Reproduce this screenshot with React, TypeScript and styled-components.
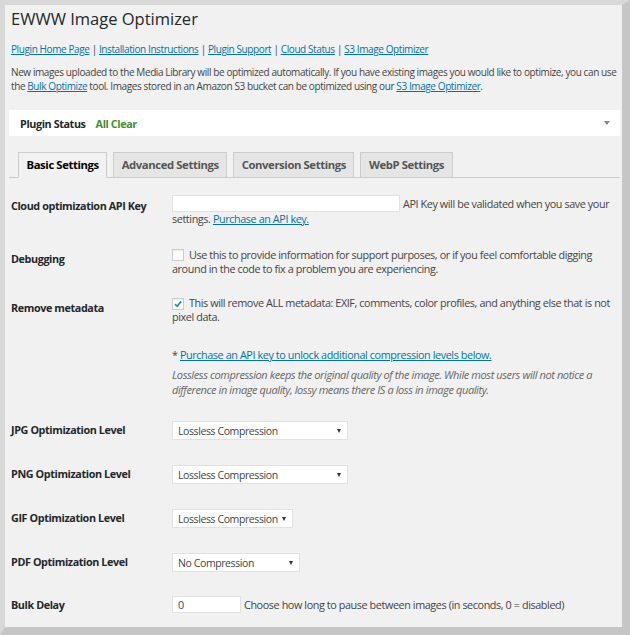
import React from 'react';
import styled, { createGlobalStyle } from 'styled-components';

const GlobalStyle = createGlobalStyle`
  html, body { margin: 0; padding: 0; }
  body { background: #c9c9c9; font-family: "Open Sans", "Noto Sans", sans-serif; }
`;

const Frame = styled.div`
  width: 630px;
  height: 635px;
  box-sizing: border-box;
  border-style: solid;
  border-width: 5px 8px 8px 5px;
  border-color: #d8d8d8 #c6c6c6 #c6c6c6 #d8d8d8;
  background: #f1f1f1;
  padding: 2px 4px 0 6px;
  font-size: 10px;
  letter-spacing: -0.4px;
  color: #444;
  overflow: hidden;
`;

const Title = styled.h1`
  margin: 0;
  font-size: 16.5px;
  font-weight: 400;
  line-height: 24px;
  letter-spacing: 0;
  color: #23282d;
`;

const Para = styled.p<{ $space: number }>`
  margin: ${(p) => p.$space}px 0 0;
  line-height: 14px;
`;

const Link = styled.a`
  color: #0073aa;
  text-decoration: underline;
`;

const StatusBox = styled.div`
  margin: 17px -2px 0;
  height: 26px;
  background: #fff;
  display: flex;
  align-items: center;
  padding: 0 10px 0 11px;
  font-size: 10.8px;
`;

const StatusLabel = styled.span`
  font-weight: 700;
  color: #23282d;
`;

const StatusValue = styled.span`
  font-weight: 700;
  color: #3f8f2f;
  margin-left: 10px;
`;

const Caret = styled.span`
  margin-left: auto;
  width: 0;
  height: 0;
  border-left: 3px solid transparent;
  border-right: 3px solid transparent;
  border-top: 4px solid #888;
`;

const TabBar = styled.div`
  margin: 16px -2px 0;
  padding-left: 9px;
  display: flex;
  gap: 6px;
  border-bottom: 1px solid #ccc;
`;

const Tab = styled.div<{ $active?: boolean }>`
  height: 26px;
  box-sizing: border-box;
  margin-bottom: -1px;
  padding: 0 7.5px;
  border: 1px solid #ccc;
  border-bottom: 1px solid ${(p) => (p.$active ? '#f1f1f1' : '#ccc')};
  background: ${(p) => (p.$active ? '#f1f1f1' : '#e5e5e5')};
  color: ${(p) => (p.$active ? '#000' : '#555')};
  font-weight: 700;
  font-size: 11.3px;
  line-height: 24px;
`;

const Row = styled.div<{ $space: number }>`
  display: flex;
  margin-top: ${(p) => p.$space}px;
  font-size: 10.8px;
`;

const Label = styled.div<{ $drop: number }>`
  width: 161px;
  flex: none;
  padding-top: ${(p) => p.$drop}px;
  font-weight: 700;
  color: #23282d;
  line-height: 14px;
`;

const Field = styled.div`
  flex: 1;
  line-height: 14px;
`;

const FirstLine = styled.div`
  display: flex;
  align-items: center;
  gap: 3px;
  height: 17px;
`;

const TextInput = styled.input<{ $w: number }>`
  width: ${(p) => p.$w}px;
  height: 17px;
  box-sizing: border-box;
  margin: 0;
  padding: 0 5px;
  border: 1px solid #e1e1e1;
  background: #fff;
  font: inherit;
  color: #444;
  outline: none;
`;

const Check = styled.span`
  display: inline-flex;
  align-items: center;
  justify-content: center;
  width: 12px;
  height: 12px;
  box-sizing: border-box;
  border: 1px solid #c9ccd0;
  background: #fff;
  vertical-align: -2px;
  margin-right: 5px;
  box-shadow: inset 0 1px 2px rgba(0, 0, 0, 0.08);
`;

const Note = styled.p`
  margin: 5px 0 0;
  line-height: 15px;
  font-size: 11px;
  font-style: italic;
  color: #666;
`;

const SelectBox = styled.div<{ $w: number }>`
  width: ${(p) => p.$w}px;
  height: 19px;
  box-sizing: border-box;
  display: flex;
  align-items: center;
  padding: 0 6px 0 5px;
  background: #fff;
  border: 1px solid #e1e1e1;
  color: #444;
  font-size: 10.5px;
`;

const SelectCaret = styled.span`
  margin-left: auto;
  width: 0;
  height: 0;
  border-left: 2px solid transparent;
  border-right: 2px solid transparent;
  border-top: 4px solid #333;
`;

function Checkbox({ on }: { on?: boolean }) {
  return (
    <Check>
      {on && (
        <svg width="10" height="10" viewBox="0 0 10 10">
          <path d="M2 5.2 L4.1 7.3 L8.2 2.4" fill="none" stroke="#1e8cbe" strokeWidth="1.7" />
        </svg>
      )}
    </Check>
  );
}

function Select({ w, value }: { w: number; value: string }) {
  return (
    <SelectBox $w={w}>
      {value}
      <SelectCaret />
    </SelectBox>
  );
}

const levels: [string, number, string][] = [
  ['JPG Optimization Level', 176, 'Lossless Compression'],
  ['PNG Optimization Level', 176, 'Lossless Compression'],
  ['GIF Optimization Level', 121, 'Lossless Compression'],
  ['PDF Optimization Level', 128, 'No Compression'],
];

export default function App() {
  return (
    <>
      <GlobalStyle />
      <Frame>
        <Title>EWWW Image Optimizer</Title>
        <Para $space={11}>
          <Link>Plugin Home Page</Link> | <Link>Installation Instructions</Link> |{' '}
          <Link>Plugin Support</Link> | <Link>Cloud Status</Link> | <Link>S3 Image Optimizer</Link>
        </Para>
        <Para $space={9}>
          New images uploaded to the Media Library will be optimized automatically. If you have existing images you
          would like to optimize, you can use
          <br />
          the <Link>Bulk Optimize</Link> tool. Images stored in an Amazon S3 bucket can be optimized using our{' '}
          <Link>S3 Image Optimizer</Link>.
        </Para>
        <StatusBox>
          <StatusLabel>Plugin Status</StatusLabel>
          <StatusValue>All Clear</StatusValue>
          <Caret />
        </StatusBox>
        <TabBar>
          <Tab $active>Basic Settings</Tab>
          <Tab>Advanced Settings</Tab>
          <Tab>Conversion Settings</Tab>
          <Tab>WebP Settings</Tab>
        </TabBar>

        <Row $space={17}>
          <Label $drop={4}>Cloud optimization API Key</Label>
          <Field>
            <FirstLine>
              <TextInput $w={228} defaultValue="" />
              API Key will be validated when you save your
            </FirstLine>
            settings. <Link>Purchase an API key.</Link>
          </Field>
        </Row>

        <Row $space={22}>
          <Label $drop={4}>Debugging</Label>
          <Field>
            <Checkbox />
            Use this to provide information for support purposes, or if you feel comfortable digging
            <br />
            around in the code to fix a problem you are experiencing.
          </Field>
        </Row>

        <Row $space={20}>
          <Label $drop={5}>Remove metadata</Label>
          <Field>
            <Checkbox on />
            This will remove ALL metadata: EXIF, comments, color profiles, and anything else that is not
            <br />
            pixel data.
          </Field>
        </Row>

        <Row $space={24}>
          <Label $drop={0} />
          <Field>
            * <Link>Purchase an API key to unlock additional compression levels below.</Link>
            <Note>
              Lossless compression keeps the original quality of the image. While most users will not notice a
              <br />
              difference in image quality, lossy means there IS a loss in image quality.
            </Note>
          </Field>
        </Row>

        {levels.map(([label, w, value], i) => (
          <Row key={label} $space={i === 0 ? 24 : 25}>
            <Label $drop={2}>{label}</Label>
            <Field>
              <Select w={w} value={value} />
            </Field>
          </Row>
        ))}

        <Row $space={24}>
          <Label $drop={2}>Bulk Delay</Label>
          <Field>
            <FirstLine>
              <TextInput $w={69} defaultValue="0" />
              Choose how long to pause between images (in seconds, 0 = disabled)
            </FirstLine>
          </Field>
        </Row>
      </Frame>
    </>
  );
}
